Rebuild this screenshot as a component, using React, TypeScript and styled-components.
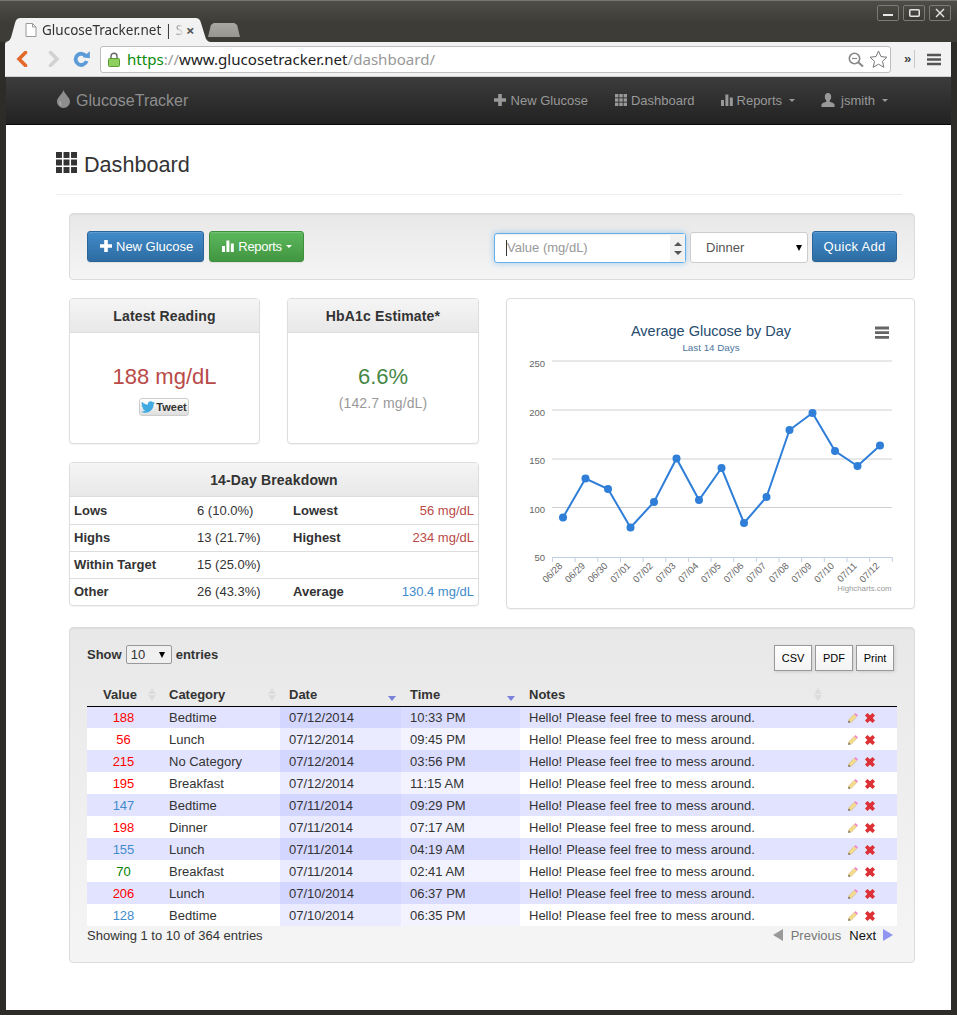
import React from 'react';
import styled, { createGlobalStyle } from 'styled-components';
import { FaTwitter } from 'react-icons/fa';

const sans = '"Liberation Sans", Arial, sans-serif';

const GlobalStyle = createGlobalStyle`
  html, body {
    margin: 0;
    padding: 0;
    background: #2c2b28;
  }
  * {
    box-sizing: border-box;
  }
`;

/* ---------- browser window ---------- */

const Window = styled.div`
  width: 957px;
  height: 1015px;
  padding: 0 6px 5px 5px;
  background: #2d2c29;
  border-top: 1px solid #77766f;
  display: flex;
  flex-direction: column;
  overflow: hidden;
  font-family: ${sans};
`;

const TitleBar = styled.div`
  height: 41px;
  margin: 0 -6px 0 -5px;
  padding-right: 6px;
  background: linear-gradient(#4f4d48 0, #3d3c37 22px, #3c3b36 100%);
  display: flex;
  justify-content: space-between;
  align-items: flex-start;
  flex-shrink: 0;
`;

const TabStrip = styled.div`
  align-self: flex-end;
  padding-left: 5px;
  display: flex;
  align-items: flex-start;
`;

const ActiveTab = styled.div`
  width: 206px;
  height: 24px;
  background: #f2f2f2;
  clip-path: path('M0 24 C5 24 6 20 7 16 L10 5 C11 1 13 0 16 0 L190 0 C193 0 195 1 196 5 L200 18 C201 22 203 24 206 24 Z');
  display: flex;
  align-items: center;
  padding: 0 0 0 20px;
  font-family: "Noto Sans", sans-serif;
  font-size: 13.5px;
  color: #333;
`;

const TabIcon = styled.svg`
  width: 12px;
  height: 14px;
  margin-right: 5px;
  flex-shrink: 0;
`;

const TabTitle = styled.span`
  width: 142px;
  white-space: nowrap;
  -webkit-mask-image: linear-gradient(90deg, #000 126px, transparent 142px);
  mask-image: linear-gradient(90deg, #000 126px, transparent 142px);
`;

const TabClose = styled.span`
  margin-left: 2px;
  font-size: 15px;
  font-weight: 700;
  color: #555;
  line-height: 1;
`;

const InactiveTab = styled.div`
  width: 32px;
  height: 14px;
  margin: 5px 0 0 -3px;
  background: linear-gradient(#a8a7a3, #96958f);
  clip-path: polygon(0 100%, 9% 14%, 18% 0, 82% 0, 91% 14%, 100% 100%);
`;

const WindowControls = styled.div`
  display: flex;
  gap: 4px;
  margin-top: 4px;
`;

const WindowButton = styled.div`
  width: 22px;
  height: 16px;
  border: 1px solid #7c7b75;
  border-radius: 2px;
  background: linear-gradient(#4b4a45, #3b3a35);
  display: flex;
  align-items: center;
  justify-content: center;
  svg {
    display: block;
  }
`;

const Toolbar = styled.div`
  height: 35px;
  background: #f2f2f2;
  border-bottom: 1px solid #d0d0d0;
  display: flex;
  align-items: center;
  flex-shrink: 0;
  padding-left: 11px;
  border-radius: 2px 0 0 0;
`;

const NavIcon = styled.svg<{ $ml?: number }>`
  display: block;
  flex-shrink: 0;
  margin-left: ${(p) => p.$ml ?? 0}px;
`;

const Omnibox = styled.div`
  width: 791px;
  height: 27px;
  margin-left: 10px;
  background: #fff;
  border: 1px solid #bdbdbd;
  border-radius: 3px;
  display: flex;
  align-items: center;
  padding: 0 2px 0 7px;
  font-family: "Noto Sans", sans-serif;
  font-size: 15.1px;
`;

const UrlText = styled.div`
  flex: 1;
  margin-left: 7px;
  white-space: nowrap;
  color: #222;
`;

const UrlScheme = styled.span`
  color: #0a8a0a;
`;

const UrlMuted = styled.span`
  color: #999;
`;

const ToolbarRight = styled.div`
  display: flex;
  align-items: center;
  margin-left: 13px;
`;

const Chevrons = styled.span`
  font-size: 13px;
  font-weight: 700;
  color: #444;
  padding-right: 4px;
  border-right: 1px solid #c8c8c8;
  height: 18px;
  line-height: 18px;
  width: 11px;
`;

const Page = styled.div`
  flex: 1;
  background: #fff;
  min-height: 0;
  margin-left: 1px;
`;

/* ---------- app navbar ---------- */

const Navbar = styled.div`
  height: 48px;
  background: linear-gradient(#3c3c3c, #222);
  border-bottom: 1px solid #080808;
  display: flex;
  align-items: center;
  justify-content: space-between;
  padding: 0 63px 0 51px;
  color: #999;
`;

const Brand = styled.div`
  display: flex;
  align-items: center;
  font-size: 16px;
  gap: 6px;
  color: #8e8e8e;
  svg {
    margin-top: -4px;
  }
`;

const NavLinks = styled.div`
  display: flex;
  align-items: center;
  gap: 26px;
`;

const NavLink = styled.div<{ $gap: number }>`
  display: flex;
  align-items: center;
  gap: ${(p) => p.$gap}px;
  font-size: 13px;
  color: #999;
  &:first-child {
    margin-right: 1px;
  }
  svg {
    margin-top: -2px;
  }
`;

const Caret = styled.span<{ $color?: string; $ml?: number }>`
  display: inline-block;
  width: 0;
  height: 0;
  margin-left: ${(p) => p.$ml ?? 3}px;
  border-left: 3px solid transparent;
  border-right: 3px solid transparent;
  border-top: 3px solid ${(p) => p.$color || '#999'};
`;

/* ---------- content ---------- */

const Content = styled.div`
  padding: 0 49px 0 50px;
`;

const Header = styled.div`
  height: 70px;
  border-bottom: 1px solid #eee;
  display: flex;
  align-items: flex-end;
  gap: 7px;
  padding-bottom: 15px;
  margin-bottom: 18px;
  color: #333;
  svg {
    margin-bottom: 6px;
  }
`;

const HeaderTitle = styled.h1`
  margin: 0;
  font-size: 21.6px;
  font-weight: 400;
  line-height: 28px;
`;

const Inner = styled.div`
  margin: 0 -13px 0 13px;
`;

const Well = styled.div`
  background: linear-gradient(#e8e8e8, #f5f5f5);
  border: 1px solid #dcdcdc;
  border-radius: 4px;
  box-shadow: inset 0 1px 1px rgba(0, 0, 0, 0.05);
`;

const ActionWell = styled(Well)`
  height: 67px;
  padding: 17px 17px 0;
  display: flex;
  justify-content: space-between;
  align-items: flex-start;
`;

const ButtonRow = styled.div`
  display: flex;
  gap: 5px;
`;

const Button = styled.div<{ $variant: 'blue' | 'green' }>`
  height: 31px;
  display: flex;
  align-items: center;
  padding: 0 10px 0 12px;
  gap: 4px;
  border-radius: 3px;
  color: #fff;
  font-size: 13px;
  border: 1px solid ${(p) => (p.$variant === 'blue' ? '#2b669a' : '#3e8f3e')};
  background: ${(p) =>
    p.$variant === 'blue'
      ? 'linear-gradient(#428bca, #2d6ca2)'
      : 'linear-gradient(#5cb85c, #419641)'};
  box-shadow: inset 0 1px 0 rgba(255, 255, 255, 0.15), 0 1px 1px rgba(0, 0, 0, 0.075);
  svg {
    margin-top: -2px;
  }
`;

const ReportsButton = styled(Button)`
  width: 95px;
  padding-right: 0;
  letter-spacing: -0.3px;
`;

const QuickForm = styled.div`
  display: flex;
  align-items: flex-start;
  gap: 4px;
`;

const ValueInput = styled.div`
  width: 192px;
  height: 30px;
  margin-top: 2px;
  background: #fff;
  border: 1px solid #66afe9;
  border-radius: 3px;
  box-shadow: inset 0 1px 1px rgba(0, 0, 0, 0.075), 0 0 6px rgba(102, 175, 233, 0.6);
  display: flex;
  align-items: center;
  justify-content: space-between;
  padding-left: 11px;
  font-size: 13px;
  color: #999;
`;

const CursorText = styled.span`
  border-left: 1px solid #333;
  line-height: 16px;
`;

const Spinner = styled.div`
  width: 15px;
  height: 28px;
  background: #f1f1f1;
  display: flex;
  flex-direction: column;
  align-items: center;
  justify-content: space-around;
  padding: 5px 0;
`;

const SpinUp = styled.span`
  width: 0;
  height: 0;
  border-left: 4px solid transparent;
  border-right: 4px solid transparent;
  border-bottom: 4px solid #555;
`;

const SpinDown = styled(SpinUp)`
  border-bottom: 0;
  border-top: 4px solid #555;
`;

const DinnerSelect = styled.div`
  width: 118px;
  height: 31px;
  margin-top: 1px;
  background: #fff;
  border: 1px solid #ccc;
  border-radius: 3px;
  display: flex;
  align-items: center;
  justify-content: space-between;
  padding: 0 5px 0 15px;
  font-size: 13px;
  color: #555;
`;

const BlackArrow = styled.span`
  width: 0;
  height: 0;
  border-left: 3.5px solid transparent;
  border-right: 3.5px solid transparent;
  border-top: 6px solid #000;
`;

const QuickAdd = styled(Button)`
  padding: 0;
  width: 85px;
  justify-content: center;
  letter-spacing: 0.3px;
`;

const Columns = styled.div`
  display: grid;
  grid-template-columns: 410px 409px;
  column-gap: 27px;
  margin-top: 18px;
`;

const LeftColumn = styled.div`
  display: flex;
  flex-direction: column;
  gap: 18px;
`;

const StatRow = styled.div`
  display: grid;
  grid-template-columns: 191px 192px;
  column-gap: 27px;
`;

const Panel = styled.div`
  background: #fff;
  border: 1px solid #ddd;
  border-radius: 4px;
  box-shadow: 0 1px 1px rgba(0, 0, 0, 0.05);
  overflow: hidden;
`;

const PanelHead = styled.div`
  height: 34px;
  background: linear-gradient(#f5f5f5, #e8e8e8);
  border-bottom: 1px solid #ddd;
  font-size: 14px;
  font-weight: 700;
  letter-spacing: 0.15px;
  color: #333;
  display: flex;
  align-items: center;
  justify-content: center;
`;

const StatBody = styled.div`
  height: 110px;
  padding-top: 30px;
  display: flex;
  flex-direction: column;
  align-items: center;
`;

const BigValue = styled.div<{ $color: string }>`
  font-size: 22px;
  line-height: 28px;
  color: ${(p) => p.$color};
`;

const SubValue = styled.div`
  margin-top: 3px;
  font-size: 14px;
  line-height: 18px;
  letter-spacing: 0.1px;
  color: #999;
`;

const TweetButton = styled.div`
  margin: 7px 0 0 -1px;
  height: 18px;
  width: 50px;
  border: 1px solid #ccc;
  border-radius: 3px;
  background: linear-gradient(#fff, #dedede);
  display: flex;
  align-items: center;
  justify-content: center;
  gap: 1px;
  font-size: 11px;
  font-weight: 700;
  color: #333;
`;

const BreakdownTable = styled.table`
  width: 100%;
  border-collapse: collapse;
  table-layout: fixed;
  font-size: 13px;
  color: #333;
`;

const BreakdownRow = styled.tr`
  height: 27px;
  border-top: 1px solid #ddd;
  &:first-child {
    border-top: 0;
  }
`;

const BreakLabel = styled.td`
  padding: 0 4px;
  font-weight: 700;
`;

const BreakValue = styled.td`
  padding: 0 4px;
`;

const BreakRight = styled.td<{ $color: string }>`
  padding: 0 4px;
  text-align: right;
  color: ${(p) => p.$color};
`;

const ChartPanel = styled(Panel)`
  height: 311px;
`;

const ChartSvg = styled.svg`
  display: block;
`;

const TableWell = styled(Well)`
  height: 336px;
  margin-top: 18px;
  padding: 17px 17px 0;
`;

const TableTop = styled.div`
  display: flex;
  justify-content: space-between;
  align-items: flex-start;
  height: 39px;
`;

const LengthControl = styled.div`
  display: flex;
  align-items: center;
  gap: 4px;
  font-size: 13px;
  font-weight: 700;
  color: #333;
  height: 19px;
`;

const LengthSelect = styled.div`
  width: 46px;
  height: 19px;
  border: 1px solid #999;
  border-radius: 2px;
  background: #f0f0f0;
  display: flex;
  align-items: center;
  justify-content: space-between;
  padding: 0 6px 0 4px;
  font-weight: 400;
`;

const ExportButtons = styled.div`
  display: flex;
  gap: 3px;
  margin-right: 3px;
`;

const ExportButton = styled.div`
  height: 26px;
  width: 38px;
  background: linear-gradient(#fff, #f3f3f3);
  border: 1px solid #999;
  box-shadow: 1px 1px 3px #ccc;
  font-size: 11px;
  color: #000;
  display: flex;
  align-items: center;
  justify-content: center;
`;

const DataTable = styled.table`
  width: 810px;
  border-collapse: collapse;
  table-layout: fixed;
  font-size: 13px;
  color: #333;
`;

const HeadCell = styled.th<{ $pad?: number }>`
  height: 22px;
  padding: 0 0 0 ${(p) => p.$pad ?? 9}px;
  text-align: left;
  font-weight: 700;
  border-bottom: 1px solid #000;
  position: relative;
`;

const SortMark = styled.span`
  position: absolute;
  right: 4px;
  top: 4px;
  display: flex;
  flex-direction: column;
  gap: 1px;
`;

const SortUp = styled.span`
  width: 0;
  height: 0;
  border-left: 4px solid transparent;
  border-right: 4px solid transparent;
  border-bottom: 6px solid #dcdcdc;
`;

const SortDown = styled(SortUp)<{ $active?: boolean }>`
  border-bottom: 0;
  border-top: ${(p) => (p.$active ? '5px solid #7c80dd' : '6px solid #dcdcdc')};
`;

const SortDownMark = styled(SortMark)`
  right: 5px;
  top: 12px;
`;

const Row = styled.tr`
  height: 22px;
`;

const Cell = styled.td<{ $odd: boolean; $sort?: 0 | 1 | 2 }>`
  padding: 0 0 0 9px;
  white-space: nowrap;
  background: ${(p) => {
    if (p.$sort === 1) return p.$odd ? '#d3d6ff' : '#eaebff';
    if (p.$sort === 2) return p.$odd ? '#dadcff' : '#f2f3ff';
    return p.$odd ? '#e2e4ff' : '#fff';
  }};
`;

const ValueCell = styled(Cell)<{ $color: string }>`
  padding: 0;
  text-align: center;
  color: ${(p) => p.$color};
`;

const NotesCell = styled(Cell)`
  word-spacing: 0.3px;
`;

const ActionCell = styled(Cell)`
  padding: 0 0 0 22px;
`;

const ActionIcons = styled.div`
  display: flex;
  align-items: center;
  gap: 7px;
  padding-top: 1px;
`;

const TableFoot = styled.div`
  display: flex;
  justify-content: space-between;
  align-items: center;
  height: 18px;
  font-size: 13px;
  color: #333;
  padding-right: 4px;
`;

const Pager = styled.div`
  display: flex;
  align-items: center;
`;

const PagerArrow = styled.span<{ $dir: 'left' | 'right' }>`
  width: 0;
  height: 0;
  border-top: 6px solid transparent;
  border-bottom: 6px solid transparent;
  ${(p) =>
    p.$dir === 'left'
      ? 'border-right: 10px solid #999; margin-right: 8px;'
      : 'border-left: 10px solid #8f95f0; margin-left: 7px;'}
`;

const PagerPrev = styled.span`
  color: #777;
  margin-right: 8px;
`;

const PagerNext = styled.span`
  color: #111;
`;

/* ---------- icons ---------- */

const PlusIcon = ({ size = 12, color = '#999' }: { size?: number; color?: string }) => (
  <svg width={size} height={size} viewBox="0 0 12 12">
    <path d="M4.2 0h3.6v4.2H12v3.6H7.8V12H4.2V7.8H0V4.2h4.2z" fill={color} />
  </svg>
);

const GridIcon = ({ size = 12, color = '#999' }: { size?: number; color?: string }) => (
  <svg width={size} height={size} viewBox="0 0 12 12">
    {[0, 4.3, 8.6].map((x) =>
      [0, 4.3, 8.6].map((y) => <rect key={`${x}-${y}`} x={x} y={y} width="3.4" height="3.4" fill={color} />),
    )}
  </svg>
);

const BarsIcon = ({ size = 12, color = '#999' }: { size?: number; color?: string }) => (
  <svg width={size} height={size} viewBox="0 0 12 12">
    <rect x="0" y="6" width="3" height="6" fill={color} />
    <rect x="4.4" y="0.5" width="3" height="11.5" fill={color} />
    <rect x="8.8" y="3.5" width="3" height="8.5" fill={color} />
  </svg>
);

const UserIcon = () => (
  <svg width="14" height="14" viewBox="0 0 14 14">
    <path
      d="M7 0c2 0 3.2 1.6 3.2 3.7 0 1.5-.6 3-1.5 3.8v1.2c1.8.7 4.3 1.4 4.8 2.6V14H.5v-2.7c.5-1.2 3-1.9 4.8-2.6V7.5C4.4 6.7 3.8 5.2 3.8 3.7 3.8 1.6 5 0 7 0z"
      fill="#999"
    />
  </svg>
);

const DropIcon = () => (
  <svg width="13" height="18" viewBox="0 0 13 18">
    <path d="M6.5 0C7.5 4 13 7.5 13 11.6 13 15.2 10.1 18 6.5 18S0 15.2 0 11.6C0 7.5 5.5 4 6.5 0z" fill="#8e8e8e" />
    <path d="M3.5 11c-.6 1.8.3 3.6 1.8 4.2-2.6-.2-3.6-2.8-1.8-4.2z" fill="#c4c4c4" />
  </svg>
);

const PencilIcon = () => (
  <svg width="10" height="10" viewBox="0 0 10 10">
    <path d="M0.5 9.5 1 6.6 6.4 1.2 8.8 3.6 3.4 9z" fill="#f7dc8e" stroke="#c2a765" strokeWidth="0.5" />
    <path d="M6.4 1.2 7.6 0 10 2.4 8.8 3.6z" fill="#f47fd6" />
    <path d="M0.3 9.7 0.8 7.6 2.4 9.2z" fill="#555" />
  </svg>
);

const CrossIcon = () => (
  <svg width="10" height="10" viewBox="0 0 10 10">
    <path
      d="M2.4 0 5 2.3 7.6 0 10 2.4 7.7 5 10 7.6 7.6 10 5 7.7 2.4 10 0 7.6 2.3 5 0 2.4z"
      fill="#dc3237"
    />
  </svg>
);

/* ---------- data ---------- */

const RED = '#f00';
const BLUE = '#428bca';
const GREEN = '#008000';

const entries = [
  ['188', RED, 'Bedtime', '07/12/2014', '10:33 PM'],
  ['56', RED, 'Lunch', '07/12/2014', '09:45 PM'],
  ['215', RED, 'No Category', '07/12/2014', '03:56 PM'],
  ['195', RED, 'Breakfast', '07/12/2014', '11:15 AM'],
  ['147', BLUE, 'Bedtime', '07/11/2014', '09:29 PM'],
  ['198', RED, 'Dinner', '07/11/2014', '07:17 AM'],
  ['155', BLUE, 'Lunch', '07/11/2014', '04:19 AM'],
  ['70', GREEN, 'Breakfast', '07/11/2014', '02:41 AM'],
  ['206', RED, 'Lunch', '07/10/2014', '06:37 PM'],
  ['128', BLUE, 'Bedtime', '07/10/2014', '06:35 PM'],
];

const labels = ['06/28', '06/29', '06/30', '07/01', '07/02', '07/03', '07/04', '07/05', '07/06', '07/07', '07/08', '07/09', '07/10', '07/11', '07/12'];

const points: [number, number][] = [
  [563, 517.5], [585.5, 478.5], [608, 489], [630.5, 527.5], [654, 502], [676.5, 458.5], [699, 500], [721.5, 468],
  [744, 523], [766.5, 497], [789.5, 430], [812.5, 413], [835, 451], [857.5, 466], [880, 445.5],
];

const gridLines: [string, number, number][] = [
  ['250', 361, 367],
  ['200', 410, 415.5],
  ['150', 459, 464],
  ['100', 507.5, 512.5],
  ['50', 557, 561],
];

// coordinates in the viewBox are page pixels, read off the screenshot
const Chart = () => (
  <ChartSvg width="407" height="309" viewBox="507 299 407 309">
    <text x="711" y="336" textAnchor="middle" fontSize="14.5" fill="#274b6d" fontFamily={sans}>
      Average Glucose by Day
    </text>
    <text x="711" y="351" textAnchor="middle" fontSize="9.8" fill="#4d759e" fontFamily={sans}>
      Last 14 Days
    </text>
    <path d="M875 328h14M875 332.7h14M875 337.4h14" stroke="#666" strokeWidth="2.8" />
    {gridLines.map(([label, y, ty]) => (
      <React.Fragment key={label}>
        {label !== '50' && <line x1="552" x2="892" y1={y} y2={y} stroke="#d0d0d0" strokeWidth="1" />}
        <text x="545" y={ty} textAnchor="end" fontSize="9.5" fill="#666" fontFamily={sans}>
          {label}
        </text>
      </React.Fragment>
    ))}
    <line x1="552" x2="892" y1="557.5" y2="557.5" stroke="#c0d0e0" strokeWidth="1" />
    {labels.map((_, i) => (
      <line key={i} x1={552.5 + i * 22.65} x2={552.5 + i * 22.65} y1="557" y2="562" stroke="#c0d0e0" strokeWidth="1" />
    ))}
    <line x1="892.3" x2="892.3" y1="557" y2="562" stroke="#c0d0e0" strokeWidth="1" />
    {labels.map((label, i) => {
      const x = 563 + i * 22.65;
      return (
        <text
          key={label}
          x={x}
          y="566.5"
          textAnchor="end"
          fontSize="9.5"
          fill="#666"
          fontFamily={sans}
          transform={`rotate(-45 ${x} 566.5)`}
        >
          {label}
        </text>
      );
    })}
    <polyline points={points.map((p) => p.join(',')).join(' ')} fill="none" stroke="#2f7ed8" strokeWidth="2" />
    {points.map(([x, y]) => (
      <circle key={x} cx={x} cy={y} r="4" fill="#2f7ed8" />
    ))}
    <text x="891.5" y="591" textAnchor="end" fontSize="7.8" fill="#999" fontFamily={sans}>
      Highcharts.com
    </text>
  </ChartSvg>
);

export default function App() {
  return (
    <>
      <GlobalStyle />
      <Window>
        <TitleBar>
          <TabStrip>
            <ActiveTab>
              <TabIcon viewBox="0 0 12 14">
                <path d="M1 .5h6.5L11 4v9.5H1z" fill="#fff" stroke="#999" />
                <path d="M7.5.5V4H11" fill="none" stroke="#999" />
              </TabIcon>
              <TabTitle>GlucoseTracker.net | S</TabTitle>
              <TabClose>×</TabClose>
            </ActiveTab>
            <InactiveTab />
          </TabStrip>
          <WindowControls>
            <WindowButton>
              <svg width="10" height="10" viewBox="0 0 10 10">
                <rect x="0" y="6" width="10" height="2" fill="#e6e6e6" />
              </svg>
            </WindowButton>
            <WindowButton>
              <svg width="11" height="10" viewBox="0 0 11 10">
                <rect x="0.75" y="1.75" width="9.5" height="6.5" rx="1" fill="none" stroke="#e6e6e6" strokeWidth="1.5" />
              </svg>
            </WindowButton>
            <WindowButton>
              <svg width="10" height="10" viewBox="0 0 10 10">
                <path d="M1 1l8 8M9 1l-8 8" stroke="#e6e6e6" strokeWidth="1.4" />
              </svg>
            </WindowButton>
          </WindowControls>
        </TitleBar>
        <Toolbar>
          <NavIcon width="12" height="16" viewBox="0 0 12 16">
            <path d="M9.5 1.5 3 8l6.5 6.5" fill="none" stroke="#e2692a" strokeWidth="3.6" strokeLinecap="round" />
          </NavIcon>
          <NavIcon width="12" height="16" viewBox="0 0 12 16" $ml={20}>
            <path d="M2.5 1.5 9 8l-6.5 6.5" fill="none" stroke="#d2d2d2" strokeWidth="3.6" strokeLinecap="round" />
          </NavIcon>
          <NavIcon width="17" height="16" viewBox="0 0 17 16" $ml={13}>
            <path d="M13 5.4A5.6 5.6 0 1 0 13.6 10" fill="none" stroke="#5b9bd8" strokeWidth="3.8" />
            <path d="M9.5 6.2 16.8 7.2V0.2z" fill="#5b9bd8" />
          </NavIcon>
          <Omnibox>
            <svg width="12" height="15" viewBox="0 0 12 15">
              <path d="M3 7V4.2a3 3 0 0 1 6 0V7" fill="none" stroke="#666" strokeWidth="1.4" />
              <rect x="0.5" y="6.5" width="11" height="8" rx="1" fill="#8ed060" stroke="#5a9a32" />
            </svg>
            <UrlText>
              <UrlScheme>https</UrlScheme>
              <UrlMuted>://</UrlMuted>www.glucosetracker.net<UrlMuted>/dashboard/</UrlMuted>
            </UrlText>
            <svg width="16" height="15" viewBox="0 0 16 15">
              <circle cx="6.5" cy="6.5" r="5.2" fill="none" stroke="#888" strokeWidth="1.6" />
              <path d="M4 6.5h5" stroke="#888" strokeWidth="1.2" />
              <path d="M10.5 10.5 15 14.5" stroke="#888" strokeWidth="2" />
            </svg>
            <NavIcon width="19" height="18" viewBox="0 0 19 18" $ml={5}>
              <path d="M9.5 1l2.5 5.6 6 .6-4.5 4.1 1.3 6-5.3-3.1-5.3 3.1 1.3-6L1 7.2l6-.6z" fill="#fff" stroke="#777" />
            </NavIcon>
          </Omnibox>
          <ToolbarRight>
            <Chevrons>»</Chevrons>
            <NavIcon width="14" height="13" viewBox="0 0 14 13" $ml={12}>
              <path d="M0 2h14M0 6.5h14M0 11h14" stroke="#555" strokeWidth="2.6" />
            </NavIcon>
          </ToolbarRight>
        </Toolbar>
        <Page>
          <Navbar>
            <Brand>
              <DropIcon />
              GlucoseTracker
            </Brand>
            <NavLinks>
              <NavLink $gap={5}>
                <PlusIcon />
                New Glucose
              </NavLink>
              <NavLink $gap={4}>
                <GridIcon />
                Dashboard
              </NavLink>
              <NavLink $gap={4}>
                <BarsIcon />
                Reports
                <Caret />
              </NavLink>
              <NavLink $gap={6}>
                <UserIcon />
                jsmith
                <Caret $ml={1} />
              </NavLink>
            </NavLinks>
          </Navbar>
          <Content>
            <Header>
              <GridIcon size={21} color="#333" />
              <HeaderTitle>Dashboard</HeaderTitle>
            </Header>
            <Inner>
              <ActionWell>
                <ButtonRow>
                  <Button $variant="blue">
                    <PlusIcon color="#fff" />
                    New Glucose
                  </Button>
                  <ReportsButton $variant="green">
                    <BarsIcon color="#fff" />
                    Reports
                    <Caret $color="#fff" $ml={0} />
                  </ReportsButton>
                </ButtonRow>
                <QuickForm>
                  <ValueInput>
                    <CursorText>Value (mg/dL)</CursorText>
                    <Spinner>
                      <SpinUp />
                      <SpinDown />
                    </Spinner>
                  </ValueInput>
                  <DinnerSelect>
                    Dinner
                    <BlackArrow />
                  </DinnerSelect>
                  <QuickAdd $variant="blue">Quick Add</QuickAdd>
                </QuickForm>
              </ActionWell>
              <Columns>
                <LeftColumn>
                  <StatRow>
                    <Panel>
                      <PanelHead>Latest Reading</PanelHead>
                      <StatBody>
                        <BigValue $color="#b94a48">188 mg/dL</BigValue>
                        <TweetButton>
                          <FaTwitter size={14} color="#3fa9e0" />
                          Tweet
                        </TweetButton>
                      </StatBody>
                    </Panel>
                    <Panel>
                      <PanelHead>HbA1c Estimate*</PanelHead>
                      <StatBody>
                        <BigValue $color="#468847">6.6%</BigValue>
                        <SubValue>(142.7 mg/dL)</SubValue>
                      </StatBody>
                    </Panel>
                  </StatRow>
                  <Panel>
                    <PanelHead>14-Day Breakdown</PanelHead>
                    <BreakdownTable>
                      <colgroup>
                        <col width="123" />
                        <col width="96" />
                        <col width="82" />
                        <col />
                      </colgroup>
                      <tbody>
                        <BreakdownRow>
                          <BreakLabel>Lows</BreakLabel>
                          <BreakValue>6 (10.0%)</BreakValue>
                          <BreakLabel>Lowest</BreakLabel>
                          <BreakRight $color="#b94a48">56 mg/dL</BreakRight>
                        </BreakdownRow>
                        <BreakdownRow>
                          <BreakLabel>Highs</BreakLabel>
                          <BreakValue>13 (21.7%)</BreakValue>
                          <BreakLabel>Highest</BreakLabel>
                          <BreakRight $color="#b94a48">234 mg/dL</BreakRight>
                        </BreakdownRow>
                        <BreakdownRow>
                          <BreakLabel>Within Target</BreakLabel>
                          <BreakValue>15 (25.0%)</BreakValue>
                          <BreakLabel />
                          <BreakRight $color="#333" />
                        </BreakdownRow>
                        <BreakdownRow>
                          <BreakLabel>Other</BreakLabel>
                          <BreakValue>26 (43.3%)</BreakValue>
                          <BreakLabel>Average</BreakLabel>
                          <BreakRight $color="#428bca">130.4 mg/dL</BreakRight>
                        </BreakdownRow>
                      </tbody>
                    </BreakdownTable>
                  </Panel>
                </LeftColumn>
                <ChartPanel>
                  <Chart />
                </ChartPanel>
              </Columns>
              <TableWell>
                <TableTop>
                  <LengthControl>
                    Show
                    <LengthSelect>
                      10
                      <BlackArrow />
                    </LengthSelect>
                    entries
                  </LengthControl>
                  <ExportButtons>
                    <ExportButton>CSV</ExportButton>
                    <ExportButton>PDF</ExportButton>
                    <ExportButton>Print</ExportButton>
                  </ExportButtons>
                </TableTop>
                <DataTable>
                  <colgroup>
                    <col width="73" />
                    <col width="120" />
                    <col width="121" />
                    <col width="119" />
                    <col width="306" />
                    <col />
                  </colgroup>
                  <thead>
                    <tr>
                      <HeadCell $pad={16}>
                        Value
                        <SortMark>
                          <SortUp />
                          <SortDown />
                        </SortMark>
                      </HeadCell>
                      <HeadCell>
                        Category
                        <SortMark>
                          <SortUp />
                          <SortDown />
                        </SortMark>
                      </HeadCell>
                      <HeadCell>
                        Date
                        <SortDownMark>
                          <SortDown $active />
                        </SortDownMark>
                      </HeadCell>
                      <HeadCell>
                        Time
                        <SortDownMark>
                          <SortDown $active />
                        </SortDownMark>
                      </HeadCell>
                      <HeadCell>
                        Notes
                        <SortMark>
                          <SortUp />
                          <SortDown />
                        </SortMark>
                      </HeadCell>
                      <HeadCell />
                    </tr>
                  </thead>
                  <tbody>
                    {entries.map(([value, color, category, date, time], i) => {
                      const odd = i % 2 === 0;
                      return (
                        <Row key={`${date}-${time}`}>
                          <ValueCell $odd={odd} $color={color}>
                            {value}
                          </ValueCell>
                          <Cell $odd={odd}>{category}</Cell>
                          <Cell $odd={odd} $sort={1}>
                            {date}
                          </Cell>
                          <Cell $odd={odd} $sort={2}>
                            {time}
                          </Cell>
                          <NotesCell $odd={odd}>Hello! Please feel free to mess around.</NotesCell>
                          <ActionCell $odd={odd}>
                            <ActionIcons>
                              <PencilIcon />
                              <CrossIcon />
                            </ActionIcons>
                          </ActionCell>
                        </Row>
                      );
                    })}
                  </tbody>
                </DataTable>
                <TableFoot>
                  <span>Showing 1 to 10 of 364 entries</span>
                  <Pager>
                    <PagerArrow $dir="left" />
                    <PagerPrev>Previous</PagerPrev>
                    <PagerNext>Next</PagerNext>
                    <PagerArrow $dir="right" />
                  </Pager>
                </TableFoot>
              </TableWell>
            </Inner>
          </Content>
        </Page>
      </Window>
    </>
  );
}
